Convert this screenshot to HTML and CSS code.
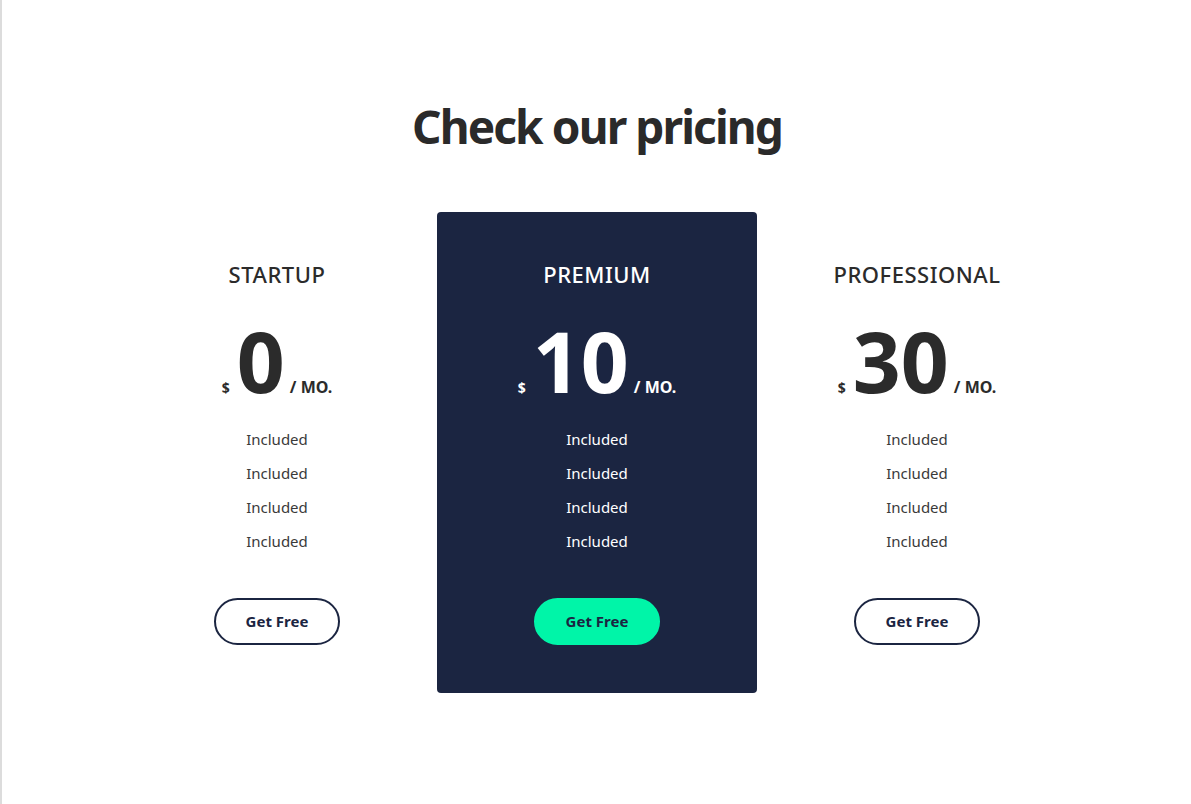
FILE: index.html
```html
<!DOCTYPE html>
<html lang="en">
<head>
<meta charset="utf-8">
<title>Pricing</title>
<link rel="stylesheet" href="styles.css">
</head>
<body>
<section class="pricing">
  <h1 class="title">Check our pricing</h1>
  <div class="plans">
    <div class="plan">
      <h3 class="plan-name">STARTUP</h3>
      <div class="price"><span class="cur">$</span><span class="amount">0</span><span class="per">/ MO.</span></div>
      <ul class="features">
        <li>Included</li>
        <li>Included</li>
        <li>Included</li>
        <li>Included</li>
      </ul>
      <a class="btn" href="#">Get Free</a>
    </div>
    <div class="plan plan-featured">
      <h3 class="plan-name">PREMIUM</h3>
      <div class="price"><span class="cur">$</span><span class="amount">10</span><span class="per">/ MO.</span></div>
      <ul class="features">
        <li>Included</li>
        <li>Included</li>
        <li>Included</li>
        <li>Included</li>
      </ul>
      <a class="btn btn-accent" href="#">Get Free</a>
    </div>
    <div class="plan">
      <h3 class="plan-name">PROFESSIONAL</h3>
      <div class="price"><span class="cur">$</span><span class="amount">30</span><span class="per">/ MO.</span></div>
      <ul class="features">
        <li>Included</li>
        <li>Included</li>
        <li>Included</li>
        <li>Included</li>
      </ul>
      <a class="btn" href="#">Get Free</a>
    </div>
  </div>
</section>
</body>
</html>
```
FILE: styles.css
```css
html, body {
  margin: 0;
  padding: 0;
  background: #ffffff;
}
body {
  font-family: "Noto Sans", "Open Sans", sans-serif;
  color: #2b2b2b;
  border-left: 2px solid #dcdcdc;
  min-height: 804px;
  box-sizing: border-box;
}
.pricing {
  padding: 98px 0 0 1px;
}
.title {
  margin: 0;
  text-align: center;
  font-size: 46px;
  line-height: 56px;
  font-weight: 700;
  letter-spacing: -1.9px;
  color: #2a2a2a;
}
.plans {
  width: 960px;
  margin: 58px auto 0;
  display: flex;
}
.plan {
  width: 320px;
  box-sizing: border-box;
  padding: 47px 0 48px;
  display: flex;
  flex-direction: column;
  align-items: center;
  border-radius: 4px;
}
.plan-featured {
  background: #1b2541;
  color: #ffffff;
}
.plan-name {
  margin: 0;
  font-size: 22px;
  line-height: 30px;
  font-weight: 500;
  letter-spacing: 0.5px;
  color: #2b2b2b;
}
.plan-featured .plan-name {
  color: #ffffff;
}
.price {
  margin-top: 30px;
  display: flex;
  align-items: baseline;
  font-weight: 700;
}
.cur {
  font-size: 14px;
  margin-right: 7px;
}
.amount {
  font-size: 84px;
  line-height: 84px;
}
.per {
  font-size: 16px;
  margin-left: 5px;
}
.features {
  list-style: none;
  margin: 19px 0 0;
  padding: 0;
  text-align: center;
}
.features li {
  font-size: 15px;
  line-height: 34px;
  color: #3a3a3a;
}
.plan-featured .features li {
  color: #ffffff;
}
.btn {
  margin-top: 40px;
  display: inline-block;
  padding: 12px 30px;
  line-height: 19px;
  font-size: 15px;
  font-weight: 700;
  color: #1b2541;
  text-decoration: none;
  border: 2px solid #1b2541;
  border-radius: 999px;
}
.btn-accent {
  background: #00f5a8;
  border-color: #00f5a8;
}
```
